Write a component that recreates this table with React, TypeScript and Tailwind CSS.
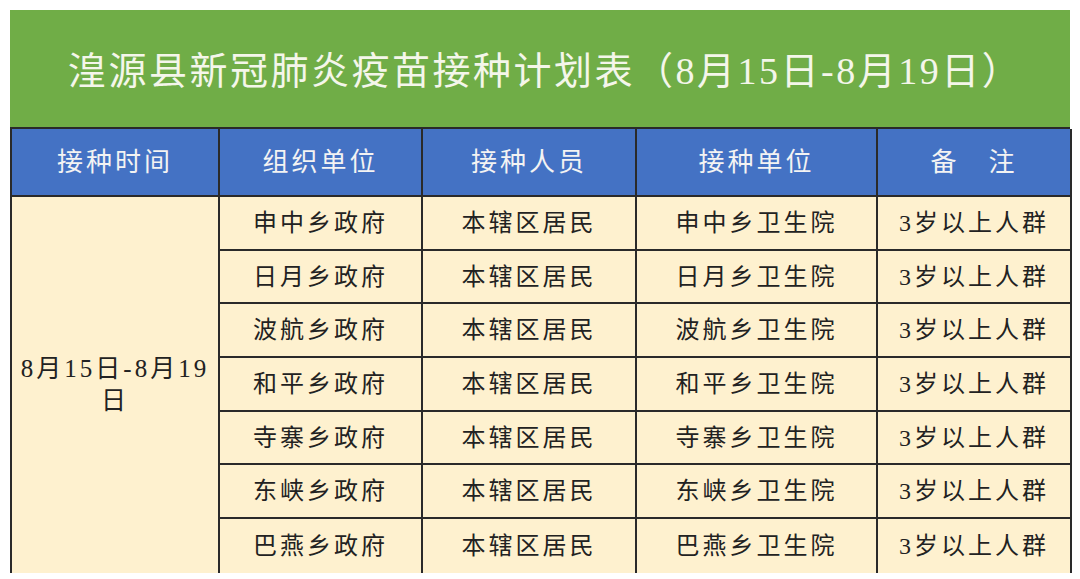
import React from 'react';

const rows = [
  ['申中乡政府', '本辖区居民', '申中乡卫生院', '3岁以上人群'],
  ['日月乡政府', '本辖区居民', '日月乡卫生院', '3岁以上人群'],
  ['波航乡政府', '本辖区居民', '波航乡卫生院', '3岁以上人群'],
  ['和平乡政府', '本辖区居民', '和平乡卫生院', '3岁以上人群'],
  ['寺寨乡政府', '本辖区居民', '寺寨乡卫生院', '3岁以上人群'],
  ['东峡乡政府', '本辖区居民', '东峡乡卫生院', '3岁以上人群'],
  ['巴燕乡政府', '本辖区居民', '巴燕乡卫生院', '3岁以上人群'],
];

const headers = ['接种时间', '组织单位', '接种人员', '接种单位', '备\u3000注'];

export default function App() {
  return (
    <div
      className="w-[1080px] h-[579px] bg-white pt-[10px] pl-[10px] overflow-hidden"
      style={{ fontFamily: '"Liberation Serif", "Noto Sans CJK SC", serif' }}
    >
      <div className="w-[1060px]">
        {/* Title */}
        <div className="h-[117px] bg-[#70ad47] flex items-center pl-[58px] pt-[6px]">
          <h1 className="text-[38px] tracking-[2.5px] text-[#f4f6ea] font-normal whitespace-nowrap">
            湟源县新冠肺炎疫苗接种计划表（8月15日-8月19日）
          </h1>
        </div>

        {/* Table */}
        <div className="grid grid-cols-[208px_203px_214px_241px_194px] grid-rows-[68px_repeat(7,53.7px)] border-t-2 border-l-2 border-[#2a2a2a]">
          {headers.map((h) => (
            <div
              key={h}
              className="bg-[#4472c4] border-r-2 border-b-2 border-[#2a2a2a] flex items-center justify-center text-[26px] tracking-[3px] text-[#f3f3f3]"
            >
              {h}
            </div>
          ))}

          <div className="row-span-7 bg-[#fef1cf] border-r-2 border-[#2a2a2a] flex items-center justify-center px-[8px] text-center text-[25px] leading-[32px] tracking-[3px] text-[#222]">
            8月15日-8月19日
          </div>

          {rows.map((r, i) =>
            r.map((c, j) => (
              <div
                key={`${i}-${j}`}
                className={`bg-[#fef1cf] border-r-2 border-[#2a2a2a] flex items-center justify-center text-[24px] tracking-[3px] text-[#222] ${
                  i < rows.length - 1 ? 'border-b-2' : ''
                }`}
              >
                {c}
              </div>
            ))
          )}
        </div>
      </div>
    </div>
  );
}
